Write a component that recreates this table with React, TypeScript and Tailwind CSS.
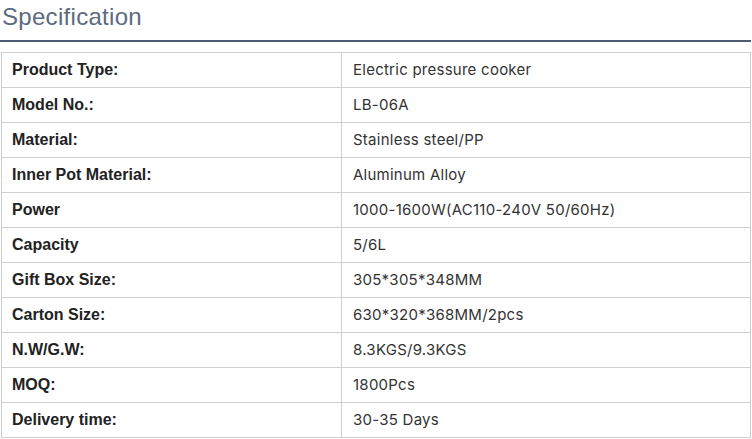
const rows: [string, string][] = [
  ["Product Type:", "Electric pressure cooker"],
  ["Model No.:", "LB-06A"],
  ["Material:", "Stainless steel/PP"],
  ["Inner Pot Material:", "Aluminum Alloy"],
  ["Power", "1000-1600W(AC110-240V 50/60Hz)"],
  ["Capacity", "5/6L"],
  ["Gift Box Size:", "305*305*348MM"],
  ["Carton Size:", "630*320*368MM/2pcs"],
  ["N.W/G.W:", "8.3KGS/9.3KGS"],
  ["MOQ:", "1800Pcs"],
  ["Delivery time:", "30-35 Days"],
];

export default function App() {
  return (
    <div className="w-[752px] h-[439px] bg-white overflow-hidden">
      <div className="pr-[1px]">
        <h2 className="h-[40px] pl-[2px] pt-[2px] text-[24px] leading-[30px] tracking-[0.3px] text-[#5b6b80] font-['Liberation_Sans',Arial,sans-serif]">
          Specification
        </h2>
        <div className="h-[2px] bg-[#4e5c6f]" />
      </div>
      <table className="mt-[10px] ml-[1px] w-[750px] border-collapse">
        <tbody>
          {rows.map(([label, value]) => (
            <tr key={label} className="h-[35px]">
              <td className="w-[340px] border border-[#cfcfcf] pl-[10px] text-[16px] font-bold text-[#222] font-['Liberation_Sans',Arial,sans-serif]">
                {label}
              </td>
              <td className="border border-[#cfcfcf] pl-[11px] text-[15px] tracking-[0.25px] text-[#333] font-['Inter',sans-serif]">
                {value}
              </td>
            </tr>
          ))}
        </tbody>
      </table>
    </div>
  );
}
